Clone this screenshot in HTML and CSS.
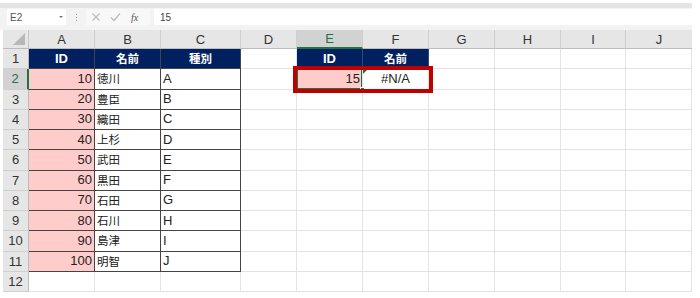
FILE: index.html
```html
<!DOCTYPE html>
<html lang="ja">
<head>
<meta charset="utf-8">
<title>Sheet</title>
<link rel="stylesheet" href="styles.css">
</head>
<body>
<div class="frame">
  <div class="topband"></div>
  <div class="fbar">
    <div class="namebox"><span>E2</span><span class="dd"></span></div>
    <div class="vdots"><i></i><i></i><i></i></div>
    <div class="fbtns">
      <svg width="10" height="10" viewBox="0 0 10 10"><path d="M1.5 1.5L8.5 8.5M8.5 1.5L1.5 8.5" stroke="#bcbcbc" stroke-width="1.2" fill="none"/></svg>
      <svg width="11" height="10" viewBox="0 0 11 10"><path d="M1 5.5L4 8.5L10 1.5" stroke="#bcbcbc" stroke-width="1.2" fill="none"/></svg>
      <span class="fx">fx</span>
    </div>
    <div class="finput">15</div>
  </div>
  <div class="sheet">
    <div class="corner"><span class="tri"></span></div>
    <div class="ch">A</div><div class="ch">B</div><div class="ch">C</div><div class="ch">D</div><div class="ch sel">E</div><div class="ch">F</div><div class="ch">G</div><div class="ch">H</div><div class="ch">I</div><div class="ch last">J</div>

    <div class="rh">1</div>
    <div class="c hd tb">ID</div><div class="c hd tb"><span class="jp">名前</span></div><div class="c hd tb"><span class="jp">種別</span></div><div class="c"></div><div class="c hd hd2">ID</div><div class="c hd hd2"><span class="jp">名前</span></div><div class="c"></div><div class="c"></div><div class="c"></div><div class="c"></div>

    <div class="rh sel">2</div>
    <div class="c pk num tb">10</div><div class="c txt tb"><span class="jp">徳川</span></div><div class="c txt tb">A</div><div class="c"></div><div class="c pk num cur">15<span class="fill"></span></div><div class="c ctr">#N/A<span class="err"></span></div><div class="c"></div><div class="c"></div><div class="c"></div><div class="c"></div>

    <div class="rh">3</div>
    <div class="c pk num tb">20</div><div class="c txt tb"><span class="jp">豊臣</span></div><div class="c txt tb">B</div><div class="c"></div><div class="c"></div><div class="c"></div><div class="c"></div><div class="c"></div><div class="c"></div><div class="c"></div>

    <div class="rh">4</div>
    <div class="c pk num tb">30</div><div class="c txt tb"><span class="jp">織田</span></div><div class="c txt tb">C</div><div class="c"></div><div class="c"></div><div class="c"></div><div class="c"></div><div class="c"></div><div class="c"></div><div class="c"></div>

    <div class="rh">5</div>
    <div class="c pk num tb">40</div><div class="c txt tb"><span class="jp">上杉</span></div><div class="c txt tb">D</div><div class="c"></div><div class="c"></div><div class="c"></div><div class="c"></div><div class="c"></div><div class="c"></div><div class="c"></div>

    <div class="rh">6</div>
    <div class="c pk num tb">50</div><div class="c txt tb"><span class="jp">武田</span></div><div class="c txt tb">E</div><div class="c"></div><div class="c"></div><div class="c"></div><div class="c"></div><div class="c"></div><div class="c"></div><div class="c"></div>

    <div class="rh">7</div>
    <div class="c pk num tb">60</div><div class="c txt tb"><span class="jp">黒田</span></div><div class="c txt tb">F</div><div class="c"></div><div class="c"></div><div class="c"></div><div class="c"></div><div class="c"></div><div class="c"></div><div class="c"></div>

    <div class="rh">8</div>
    <div class="c pk num tb">70</div><div class="c txt tb"><span class="jp">石田</span></div><div class="c txt tb">G</div><div class="c"></div><div class="c"></div><div class="c"></div><div class="c"></div><div class="c"></div><div class="c"></div><div class="c"></div>

    <div class="rh">9</div>
    <div class="c pk num tb">80</div><div class="c txt tb"><span class="jp">石川</span></div><div class="c txt tb">H</div><div class="c"></div><div class="c"></div><div class="c"></div><div class="c"></div><div class="c"></div><div class="c"></div><div class="c"></div>

    <div class="rh">10</div>
    <div class="c pk num tb">90</div><div class="c txt tb"><span class="jp">島津</span></div><div class="c txt tb">I</div><div class="c"></div><div class="c"></div><div class="c"></div><div class="c"></div><div class="c"></div><div class="c"></div><div class="c"></div>

    <div class="rh">11</div>
    <div class="c pk num tb">100</div><div class="c txt tb"><span class="jp">明智</span></div><div class="c txt tb">J</div><div class="c"></div><div class="c"></div><div class="c"></div><div class="c"></div><div class="c"></div><div class="c"></div><div class="c"></div>

    <div class="rh">12</div>
    <div class="c"></div><div class="c"></div><div class="c"></div><div class="c"></div><div class="c"></div><div class="c"></div><div class="c"></div><div class="c"></div><div class="c"></div><div class="c"></div>

    <div class="redbox"></div>
  </div>
</div>
</body>
</html>
```

FILE: styles.css
```css
html, body {
  margin: 0;
  padding: 0;
  background: #ffffff;
}
.frame {
  width: 692px;
  padding-top: 3px;
  font-family: "Liberation Sans", "Noto Sans CJK JP", sans-serif;
  color: #222;
}
.topband {
  height: 5px;
  background: #e4e4e4;
}
.fbar {
  height: 22px;
  background: #f3f3f3;
  display: flex;
  align-items: flex-start;
  padding-top: 1px;
  box-sizing: border-box;
}
.namebox {
  margin-left: 7px;
  width: 59px;
  height: 16px;
  background: #ffffff;
  display: flex;
  align-items: center;
  justify-content: space-between;
  box-sizing: border-box;
  padding: 0 3px 0 3px;
  font-size: 10px;
  color: #555;
}
.dd {
  width: 0;
  height: 0;
  border-left: 2px solid transparent;
  border-right: 2px solid transparent;
  border-top: 2px solid #777;
}
.vdots {
  width: 20px;
  height: 16px;
  display: flex;
  flex-direction: column;
  align-items: center;
  justify-content: center;
  gap: 2px;
}
.vdots i {
  width: 1px;
  height: 1px;
  background: #999;
}
.fbtns {
  width: 64px;
  height: 16px;
  display: flex;
  align-items: center;
  gap: 9px;
  padding-left: 5px;
  box-sizing: border-box;
  background: #f8f8f8;
}
.fx {
  font-family: "Liberation Serif", serif;
  font-style: italic;
  font-size: 10px;
  color: #555;
  margin-left: 1px;
}
.finput {
  margin-left: 4px;
  flex: 1;
  height: 16px;
  background: #ffffff;
  font-size: 10px;
  color: #444;
  display: flex;
  align-items: center;
  padding-left: 6px;
}
.sheet {
  position: relative;
  margin-left: 3px;
  display: grid;
  grid-template-columns: 26px 66px 66px 80px 56px 66px 66px 66px 66px 65px 66px;
  grid-template-rows: 19px repeat(12, 20.25px);
  font-size: 13px;
}
.corner {
  background: #e6e6e6;
  border-right: 1px solid #c8c8c8;
  border-bottom: 1px solid #bcbcbc;
  box-sizing: border-box;
  position: relative;
}
.tri {
  position: absolute;
  right: 3px;
  bottom: 3px;
  width: 0;
  height: 0;
  border-left: 12px solid transparent;
  border-bottom: 12px solid #b8b8b8;
}
.ch {
  background: #e6e6e6;
  border-right: 1px solid #cfcfcf;
  border-bottom: 1px solid #bcbcbc;
  box-sizing: border-box;
  display: flex;
  align-items: center;
  justify-content: center;
  color: #333;
  font-size: 13px;
}
.ch.sel {
  background: #d2d2d2;
  color: #217346;
  border-bottom: 2px solid #217346;
}
.ch.last {
  border-right: none;
}
.rh {
  background: #e6e6e6;
  border-right: 1px solid #bcbcbc;
  border-bottom: 1px solid #d0d0d0;
  box-sizing: border-box;
  display: flex;
  align-items: center;
  justify-content: center;
  color: #333;
  font-size: 13px;
}
.rh.sel {
  background: #d2d2d2;
  color: #217346;
  border-right: 2px solid #217346;
}
.c {
  border-right: 1px solid #e3e3e3;
  border-bottom: 1px solid #e3e3e3;
  box-sizing: border-box;
  display: flex;
  align-items: center;
  white-space: nowrap;
  position: relative;
  padding-bottom: 1px;
}
.c.tb {
  border-color: #444444;
}
.hd {
  background: #002060;
  color: #ffffff;
  font-weight: bold;
  justify-content: center;
}
.hd2 {
  border-right-color: #33457a;
  border-bottom-color: #002060;
}
.jp {
  font-family: "Noto Sans CJK JP", sans-serif;
  font-size: 11.5px;
}
.hd .jp {
  font-weight: bold;
}
.pk {
  background: #ffcccc;
}
.num {
  justify-content: flex-end;
  padding-right: 2px;
}
.txt {
  justify-content: flex-start;
  padding-left: 2px;
}
.ctr {
  justify-content: center;
}
.cur {
  box-shadow: inset 0 0 0 1px #217346;
}
.fill {
  position: absolute;
  right: -3px;
  bottom: -3px;
  width: 5px;
  height: 5px;
  background: #217346;
  border: 1px solid #ffffff;
  box-sizing: border-box;
  z-index: 2;
}
.err {
  position: absolute;
  left: 0;
  top: 0;
  width: 0;
  height: 0;
  border-top: 5px solid #217346;
  border-right: 5px solid transparent;
}
.redbox {
  position: absolute;
  left: 290px;
  top: 36px;
  width: 140px;
  height: 27px;
  border: 4px solid #c00000;
  box-sizing: border-box;
  z-index: 3;
}
```
